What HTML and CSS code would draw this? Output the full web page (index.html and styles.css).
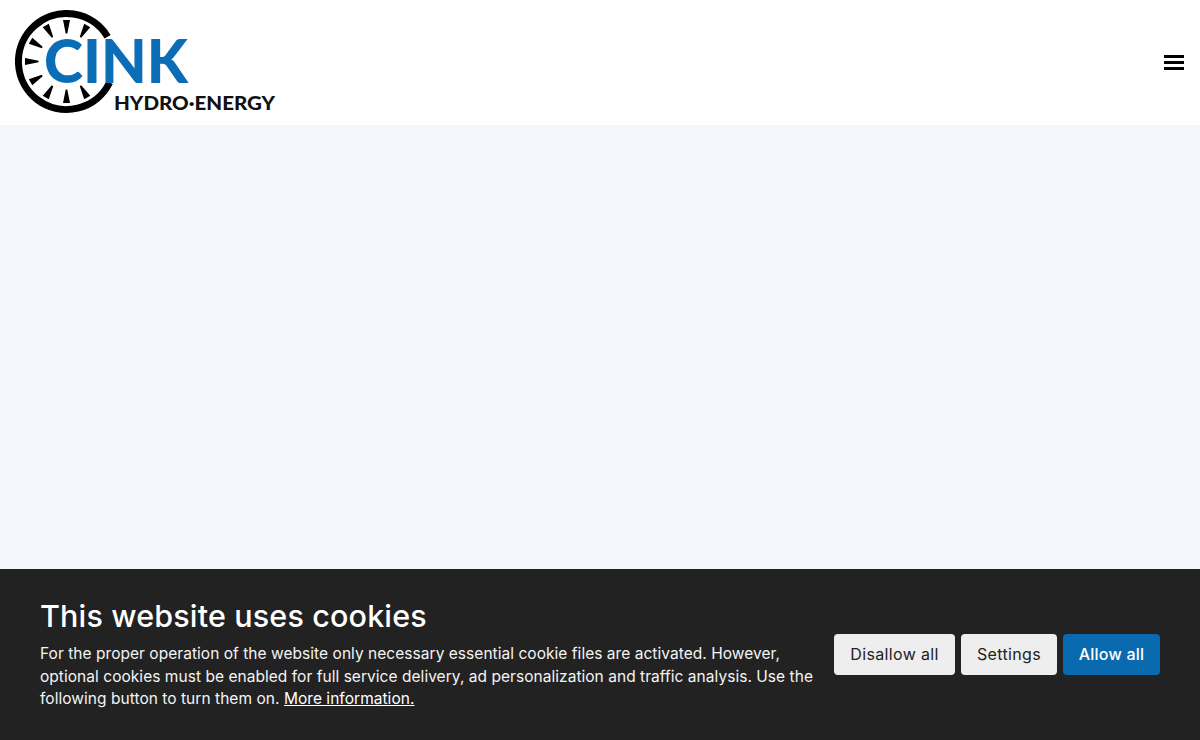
FILE: index.html
```html
<!DOCTYPE html>
<html lang="en">

<head>
    <meta charset="UTF-8">
    <title>Cink Hydro-Energy</title>
    <link rel="stylesheet" href="styles.css">
</head>

<body>
    <header class="top">
        <a href="#" class="logo">
            <svg width="262" height="106" viewBox="0 0 262 106">
                <path class="ring" d="M92.6 26.8A48 48 0 1 0 94.6 72.5"/>
                <g class="ticks">
                    <polygon points="48,10 55,10 52.3,23.5 50.7,23.5" transform="rotate(0 51.5 51.5)"/>
                    <polygon points="48,10 55,10 52.3,23.5 50.7,23.5" transform="rotate(30 51.5 51.5)"/>
                    <polygon points="48,10 55,10 52.3,23.5 50.7,23.5" transform="rotate(150 51.5 51.5)"/>
                    <polygon points="48,10 55,10 52.3,23.5 50.7,23.5" transform="rotate(180 51.5 51.5)"/>
                    <polygon points="48,10 55,10 52.3,23.5 50.7,23.5" transform="rotate(210 51.5 51.5)"/>
                    <polygon points="48,10 55,10 52.3,23.5 50.7,23.5" transform="rotate(240 51.5 51.5)"/>
                    <polygon points="48,10 55,10 52.3,23.5 50.7,23.5" transform="rotate(270 51.5 51.5)"/>
                    <polygon points="48,10 55,10 52.3,23.5 50.7,23.5" transform="rotate(300 51.5 51.5)"/>
                    <polygon points="48,10 55,10 52.3,23.5 50.7,23.5" transform="rotate(330 51.5 51.5)"/>
                </g>
                <text class="logo-name" x="29" y="73" textLength="144" lengthAdjust="spacingAndGlyphs">CINK</text>
                <text class="logo-sub" x="99" y="100" textLength="161" lengthAdjust="spacingAndGlyphs">HYDRO·ENERGY</text>
            </svg>
        </a>
        <a href="#" class="burger" aria-label="Menu">
            <span></span>
            <span></span>
            <span></span>
        </a>
    </header>

    <main class="content"></main>

    <section class="cookies">
        <div class="cookies-text">
            <h2>This website uses cookies</h2>
            <p>For the proper operation of the website only necessary essential cookie files are activated. However, optional cookies must be enabled for full service delivery, ad personalization and traffic analysis. Use the following button to turn them on. <a href="#">More information.</a></p>
        </div>
        <div class="cookies-btns">
            <a href="#" class="btn btn-disallow">Disallow all</a>
            <a href="#" class="btn btn-settings">Settings</a>
            <a href="#" class="btn btn-blue">Allow all</a>
        </div>
    </section>
</body>

</html>
```

FILE: styles.css
```css
* {
    padding: 0px;
    margin: 0px;
    box-sizing: border-box;
}

html,
body {
    height: 100%;
}

body {
    display: flex;
    flex-direction: column;
    font-family: "Inter", "Liberation Sans", sans-serif;
    background: #f3f6fb;
}

a {
    text-decoration: none;
}

.top {
    height: 125px;
    background: #fff;
    display: flex;
    align-items: center;
    justify-content: space-between;
    padding: 0 16px 0 15px;
}

.logo {
    display: block;
    height: 106px;
}

.logo svg {
    display: block;
}

.ring {
    fill: none;
    stroke: #000;
    stroke-width: 7;
}

.ticks {
    fill: #000;
}

.logo-name {
    font-family: "Lato", sans-serif;
    font-weight: 900;
    font-size: 60px;
    fill: #0a6db5;
}

.logo-sub {
    font-family: "Lato", sans-serif;
    font-weight: 900;
    font-size: 19.5px;
    fill: #111;
}

.burger {
    display: flex;
    flex-direction: column;
    gap: 3px;
    width: 20px;
}

.burger span {
    display: block;
    height: 3px;
    background: #000;
}

.content {
    flex: 1;
}

.cookies {
    height: 171px;
    background: #222;
    color: #fff;
    display: flex;
    align-items: center;
    justify-content: space-between;
    padding: 0 40px;
}

.cookies-text {
    width: 780px;
}

.cookies h2 {
    font-size: 30.5px;
    letter-spacing: 0.15px;
    line-height: 36px;
    font-weight: 500;
    margin-bottom: 9px;
}

.cookies p {
    font-size: 15.5px;
    letter-spacing: 0.04px;
    line-height: 22.5px;
    color: #f4f4f4;
}

.cookies p a {
    color: #fff;
    text-decoration: underline;
}

.cookies-btns {
    display: flex;
    gap: 6px;
}

.btn {
    display: block;
    height: 41px;
    line-height: 41px;
    text-align: center;
    font-size: 16px;
    letter-spacing: 0.35px;
    color: #222;
    background: #eee;
    border-radius: 4px;
}

.btn-disallow {
    width: 121px;
}

.btn-settings {
    width: 96px;
}

.btn-blue {
    width: 97px;
    color: #fff;
    background: #0a6ab0;
    font-weight: 500;
    letter-spacing: 0.22px;
}
```
